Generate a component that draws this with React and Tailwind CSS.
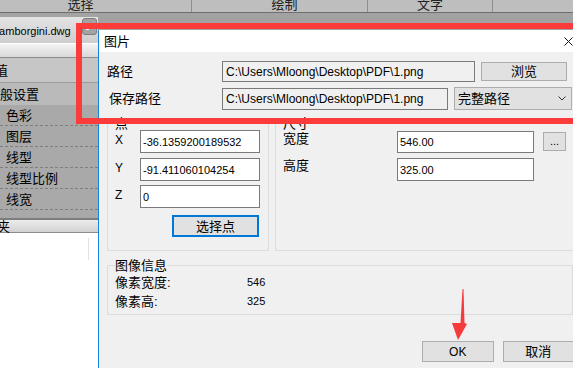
import React from 'react';

const pathValue = 'C:\\Users\\Mloong\\Desktop\\PDF\\1.png';

const propRows = ['色彩', '图层', '线型', '线型比例', '线宽'];

// Single-line readonly text box, Win32 look
const Field = ({ value, className = '' }) => (
  <input
    readOnly
    value={value}
    className={`border border-[#7a7a7a] px-[2px] text-black outline-none ${className}`}
  />
);

const WinButton = ({ children, className = '' }) => (
  <button
    type="button"
    className={`flex items-center justify-center bg-[#e1e1e1] leading-none text-black ${className}`}
  >
    {children}
  </button>
);

const App = () => {
  return (
    <div className="relative h-[368px] w-[573px] overflow-hidden bg-white font-['Liberation_Sans','Noto_Sans_CJK_SC',sans-serif] text-black">
      {/* Ribbon tabs of the CAD app (cut at the top) */}
      <div className="flex h-[12px] overflow-hidden bg-[#bebebe] text-[13px] leading-none text-[#222]">
        <div className="flex w-[192px] justify-center border-r border-[#8e8e8e] pr-[30px]">
          <span className="-mt-[2px]">选择</span>
        </div>
        <div className="flex w-[176px] justify-center border-r border-[#8e8e8e] pl-[10px]">
          <span className="-mt-[2px]">绘制</span>
        </div>
        <div className="flex w-[125px] justify-center border-r border-[#8e8e8e]">
          <span className="-mt-[2px]">文字</span>
        </div>
        <div className="flex-1" />
      </div>

      <div className="flex h-[356px]">
        {/* Properties side panel */}
        <aside className="flex w-[98px] flex-col text-[13px] leading-none">
          <div className="h-[5px] border-t border-[#6f6f6f] bg-[#a4a4a4]" />
          <div className="flex h-[26px] items-start justify-between bg-gradient-to-b from-[#e4e4e4] to-[#cdcdcd] pr-[1px]">
            <span className="-ml-[7px] pt-[9px] text-[11px]">Lamborgini.dwg</span>
            <span className="mt-[1px] flex h-[17px] w-[15px] items-end rounded-[3px] border border-[#7d7d7d] bg-[#a3a3a3] pb-[4px] pl-[3px]">
              <span className="h-[2px] w-[3px] bg-[#f4f4f4]" />
            </span>
          </div>
          <div className="h-[15px] border-t border-b border-t-white border-b-[#8c8c8c] bg-gradient-to-b from-[#f3f3f3] to-[#d9d9d9]" />
          <div className="flex h-[25px] items-center border-b border-[#9c9c9c] bg-[#c6c6c6]">
            <span className="-ml-[5px]">值</span>
          </div>
          <div className="flex h-[22px] items-center bg-[#bababa]">
            <span className="-ml-[13px]">一般设置</span>
          </div>
          {propRows.map((label) => (
            <div
              key={label}
              className="flex h-[21px] items-center border-b border-dashed border-[#7f7f7f] bg-[#a9a9a9] pl-[6px]"
            >
              {label}
            </div>
          ))}
          <div className="h-[8px] bg-[#a9a9a9]" />
          <div className="h-[2px] bg-[#7c7c7c]" />
          <div className="flex h-[13px] items-center border-b border-[#8c8c8c] bg-gradient-to-b from-[#ececec] to-[#d2d2d2]">
            <span className="-ml-[3px]">夹</span>
          </div>
          <div className="flex flex-1 bg-white pt-[5px]">
            <div className="ml-[88px] h-[22px] border-l border-[#e2e2e2]" />
          </div>
        </aside>

        {/* Drawing area behind the dialog */}
        <div className="flex-1 border-t border-[#6f6f6f] bg-[#a2a2a2]" />
      </div>

      {/* 图片 dialog */}
      <div className="absolute left-[98px] top-[30px] flex h-[338px] w-[476px] flex-col border-l border-[#1883d7] bg-[#f0f0f0]">
        <div className="flex h-[22px] items-center justify-between bg-white pl-[5px] pr-[1px]">
          <span className="text-[13px] leading-none">图片</span>
          <svg width="9" height="9" viewBox="0 0 9 9" fill="none" stroke="#111" strokeWidth="1">
            <path d="M0.5 0.5L8.5 8.5M8.5 0.5L0.5 8.5" />
          </svg>
        </div>

        <div className="flex flex-col pl-[8px] pt-[9px] text-[13px] leading-none">
          {/* 路径 */}
          <div className="flex h-[21px] items-center">
            <span className="w-[115px]">路径</span>
            <Field value={pathValue} className="h-[21px] w-[253px] bg-[#f0f0f0] pl-[3px] text-[12px]" />
            <WinButton className="ml-[6px] h-[19px] w-[86px] border border-[#adadad] text-[13px]">浏览</WinButton>
          </div>

          {/* 保存路径 */}
          <div className="mt-[5px] flex h-[23px] items-center">
            <span className="w-[115px] pl-[2px]">保存路径</span>
            <Field value={pathValue} className="h-[22px] w-[226px] bg-[#f0f0f0] pl-[3px] text-[12px]" />
            <div className="ml-[6px] flex h-[23px] w-[118px] items-center justify-between border border-[#adadad] bg-[#e1e1e1] pl-[3px] pr-[5px]">
              <span>完整路径</span>
              <svg width="8" height="5" viewBox="0 0 8 5" fill="none" stroke="#333" strokeWidth="1">
                <path d="M0.5 0.5L4 4L7.5 0.5" />
              </svg>
            </div>
          </div>

          {/* 点 / 尺寸 */}
          <div className="mt-[7px] flex items-start gap-[6px]">
            <fieldset className="h-[134px] w-[162px] border border-[#dcdcdc] px-[7px]">
              <legend className="text-[13px] leading-[13px]">点</legend>
              {[
                ['X', '-36.1359200189532', ''],
                ['Y', '-91.411060104254', 'mt-[5px]'],
                ['Z', '0', 'mt-[4px]'],
              ].map(([axis, val, gap]) => (
                <div key={axis} className={`flex items-start ${gap}`}>
                  <span className="w-[25px] pt-[4px] text-[12px]">{axis}</span>
                  <Field value={val} className="h-[23px] w-[120px] bg-white text-[11px]" />
                </div>
              ))}
              <WinButton className="ml-[57px] mt-[7px] h-[22px] w-[87px] border-2 border-[#0078d7] text-[13px]">
                选择点
              </WinButton>
            </fieldset>

            <fieldset className="h-[134px] w-[299px] border border-[#dcdcdc] px-[7px]">
              <legend className="text-[13px] leading-[13px]">尺寸</legend>
              <div className="flex items-start">
                <span className="w-[114px] pt-[2px]">宽度</span>
                <Field value="546.00" className="mt-[1px] h-[22px] w-[137px] bg-white text-[11px]" />
                <WinButton className="ml-[9px] mt-[2px] h-[19px] w-[23px] border border-[#adadad] text-[11px]">...</WinButton>
              </div>
              <div className="mt-[5px] flex items-start">
                <span className="w-[114px] pt-[1px]">高度</span>
                <Field value="325.00" className="h-[23px] w-[137px] bg-white text-[11px]" />
              </div>
            </fieldset>
          </div>

          {/* 图像信息 */}
          <fieldset className="mt-[7px] h-[57px] w-[466px] border border-[#dcdcdc] px-[7px]">
            <legend className="text-[13px] leading-[15px]">图像信息</legend>
            <div className="flex h-[19px] items-center">
              <span className="w-[132px]">像素宽度:</span>
              <span className="text-[11px]">546</span>
            </div>
            <div className="flex h-[19px] items-center">
              <span className="w-[132px]">像素高:</span>
              <span className="text-[11px]">325</span>
            </div>
          </fieldset>

          {/* OK / 取消 */}
          <div className="mt-[26px] flex pl-[315px]">
            <WinButton className="h-[21px] w-[72px] border border-[#adadad] text-[12px]">OK</WinButton>
            <WinButton className="ml-[9px] h-[21px] w-[72px] border border-[#adadad] text-[13px]">取消</WinButton>
          </div>
        </div>
      </div>

      {/* Red annotation box */}
      <div className="absolute left-[76px] top-[23px] h-[101px] w-[520px] border-[6px] border-[#fc3b3b]" />

      {/* Red annotation arrow pointing at OK */}
      <svg className="absolute left-[450px] top-[287px]" width="20" height="56" viewBox="0 0 20 56">
        <polygon points="13.5,2 14.5,36 17,37 8,53 2,36 10.5,36 12.5,2" fill="#f53b3b" />
      </svg>
    </div>
  );
};

export default App;
